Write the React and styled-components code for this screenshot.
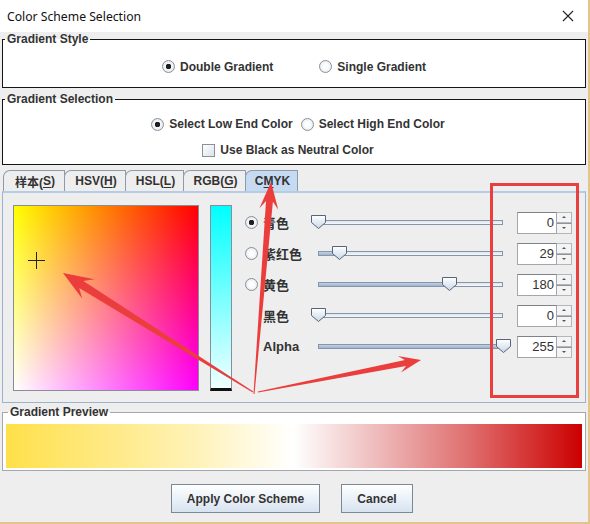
import styled, { createGlobalStyle } from "styled-components";

const GlobalStyle = createGlobalStyle`
  html, body {
    margin: 0;
    padding: 0;
    background: #eeeeee;
  }
  body {
    font-family: "Liberation Sans", Arial, "Noto Sans CJK SC", sans-serif;
    color: #333;
  }
`;

const rows = [
  { label: "青色", value: 0, radio: true, checked: true },
  { label: "紫红色", value: 29, radio: true },
  { label: "黄色", value: 180, radio: true },
  { label: "黑色", value: 0 },
  { label: "Alpha", value: 255 },
];

const tabs = [
  { text: "样本(", key: "S", after: ")", width: 62 },
  { text: "HSV(", key: "H", after: ")", width: 62 },
  { text: "HSL(", key: "L", after: ")", width: 59 },
  { text: "RGB(", key: "G", after: ")", width: 63 },
  { text: "C", key: "M", after: "YK", width: 53, selected: true },
];

// polygon for a tapering annotation arrow
const arrowPoints = (tail, tip, headLen, headW, shaftW, tailW = 1) => {
  const dx = tip[0] - tail[0];
  const dy = tip[1] - tail[1];
  const len = Math.hypot(dx, dy);
  const ux = dx / len;
  const uy = dy / len;
  const nx = -uy;
  const ny = ux;
  const barb = [tip[0] - ux * headLen, tip[1] - uy * headLen];
  const neck = [tip[0] - ux * headLen * 0.72, tip[1] - uy * headLen * 0.72];
  const p = (b, w) => `${(b[0] + nx * w).toFixed(1)},${(b[1] + ny * w).toFixed(1)}`;
  return [
    p(tail, tailW / 2),
    p(neck, shaftW / 2),
    p(barb, headW / 2),
    `${tip[0]},${tip[1]}`,
    p(barb, -headW / 2),
    p(neck, -shaftW / 2),
    p(tail, -tailW / 2),
  ].join(" ");
};

const Radio = ({ checked }) => (
  <RadioDot $checked={checked} />
);

const Spinner = ({ value }) => (
  <SpinBox>
    <SpinField>{value}</SpinField>
    <SpinButtons>
      <SpinButton>
        <Tri $up />
      </SpinButton>
      <SpinButton>
        <Tri />
      </SpinButton>
    </SpinButtons>
  </SpinBox>
);

const Slider = ({ value }) => {
  const pos = (value / 255) * 185;
  return (
    <SliderBox>
      <Track>
        <TrackFill style={{ width: pos }} />
      </Track>
      <Thumb style={{ left: pos - 8 }} width="17" height="16" viewBox="0 0 17 16">
        <defs>
          <linearGradient id="thumbg" x1="0" y1="0" x2="0" y2="1">
            <stop offset="0" stopColor="#ffffff" />
            <stop offset="1" stopColor="#c9d6e6" />
          </linearGradient>
        </defs>
        <path d="M1.5 1.5 H15.5 V8.5 L8.5 14.5 L1.5 8.5 Z" fill="url(#thumbg)" stroke="#55657a" strokeWidth="1" />
      </Thumb>
    </SliderBox>
  );
};

const App = () => {
  return (
    <>
      <GlobalStyle />
      <Window>
        <TitleBar>
          <span>Color Scheme Selection</span>
          <CloseIcon width="12" height="12" viewBox="0 0 12 12">
            <path d="M1 1 L11 11 M11 1 L1 11" stroke="#222" strokeWidth="1.1" />
          </CloseIcon>
        </TitleBar>

        <Body>
          <Group>
            <Legend>Gradient Style</Legend>
            <OptionRow $height={41} $gap={46} $shift={0}>
              <Option>
                <Radio checked />
                Double Gradient
              </Option>
              <Option>
                <Radio />
                Single Gradient
              </Option>
            </OptionRow>
          </Group>

          <Group $top={4}>
            <Legend>Gradient Selection</Legend>
            <SelectionBody>
              <OptionRow $height={20} $gap={8} $shift={4}>
                <Option>
                  <Radio checked />
                  Select Low End Color
                </Option>
                <Option>
                  <Radio />
                  Select High End Color
                </Option>
              </OptionRow>
              <OptionRow $height={20} $shift={-6}>
                <Option>
                  <CheckBox />
                  Use Black as Neutral Color
                </Option>
              </OptionRow>
            </SelectionBody>
          </Group>

          <TabStrip>
            {tabs.map((t) => (
              <Tab key={t.key} $width={t.width} $selected={t.selected}>
                {t.text}
                <u>{t.key}</u>
                {t.after}
              </Tab>
            ))}
          </TabStrip>
          <TabPanel>
            <ColorSquare>
              <Crosshair width="17" height="17" viewBox="0 0 17 17">
                <path d="M8.5 0 V17 M0 8.5 H17" stroke="#222" strokeWidth="1" />
              </Crosshair>
            </ColorSquare>
            <Strip />
            <Controls>
              {rows.map((r) => (
                <ControlRow key={r.label}>
                  <RadioCell>{r.radio && <Radio checked={r.checked} />}</RadioCell>
                  <RowLabel>{r.label}</RowLabel>
                  <Slider value={r.value} />
                  <Spinner value={r.value} />
                </ControlRow>
              ))}
            </Controls>
          </TabPanel>

          <PreviewGroup>
            <Legend>Gradient Preview</Legend>
            <PreviewBar />
          </PreviewGroup>

          <ButtonRow>
            <Button $width={149}>Apply Color Scheme</Button>
            <Button $width={72}>Cancel</Button>
          </ButtonRow>
        </Body>

        <Annotations width="590" height="524" viewBox="0 0 590 524">
          <rect x="491.5" y="184.5" width="86" height="212" fill="none" stroke="#e8403f" strokeWidth="3" />
          <polygon points={arrowPoints([254, 394], [271, 182], 27, 19, 7)} fill="#ec3d3d" />
          <polygon points={arrowPoints([253, 392], [63, 273], 30, 23, 8)} fill="#ec3d3d" />
          <polygon points={arrowPoints([258, 392], [421, 360], 22, 17, 6)} fill="#ec3d3d" />
        </Annotations>
      </Window>
    </>
  );
};

const Window = styled.div`
  position: relative;
  width: 588px;
  height: 522px;
  border-right: 2px solid #e3c48c;
  border-bottom: 2px solid #e3c48c;
  background: #eeeeee;
  display: flex;
  flex-direction: column;
  overflow: hidden;
`;

const TitleBar = styled.div`
  height: 32px;
  flex: none;
  background: #ffffff;
  display: flex;
  align-items: center;
  justify-content: space-between;
  padding: 0 14px 0 7px;
  font-family: "Segoe UI", "Noto Sans", "Open Sans", sans-serif;
  font-size: 12.2px;
  color: #111;
`;

const CloseIcon = styled.svg`
  display: block;
`;

const Body = styled.div`
  flex: 1;
  display: flex;
  flex-direction: column;
  padding: 0 2px 0 2px;
  font-size: 12px;
  font-weight: bold;
`;

const Group = styled.fieldset`
  margin: ${(p) => p.$top || 0}px 0 0 0;
  padding: 0;
  border: 1px solid #151515;
  background: #ffffff;
  min-width: 0;
`;

const Legend = styled.legend`
  margin-left: 2px;
  padding: 0 2px;
  font-size: 12px;
  font-weight: bold;
  line-height: 14px;
  color: #333;
`;

const OptionRow = styled.div`
  height: ${(p) => p.$height}px;
  display: flex;
  align-items: center;
  justify-content: center;
  gap: ${(p) => p.$gap || 0}px;
  margin-left: ${(p) => (p.$shift || 0) * 2}px;
`;

const SelectionBody = styled.div`
  display: flex;
  flex-direction: column;
  gap: 6px;
  padding: 8px 0 4px;
`;

const Option = styled.label`
  display: flex;
  align-items: center;
  gap: 5px;
  color: #333;
`;

const RadioDot = styled.span`
  width: 11px;
  height: 11px;
  border-radius: 50%;
  border: 1px solid #8b8f96;
  background: radial-gradient(circle at 50% 50%, ${(p) => (p.$checked ? "#1e1e1e 0 2.5px, #f4f6f9 3px" : "#ffffff 0, #ffffff 2px")}, #dbe2ea 100%);
  flex: none;
`;

const CheckBox = styled.span`
  width: 11px;
  height: 11px;
  border: 1px solid #8d9096;
  background: linear-gradient(135deg, #ffffff, #dbe2ea);
  flex: none;
`;

const TabStrip = styled.div`
  display: flex;
  margin: 5px 0 0 1px;
  height: 21px;
`;

const Tab = styled.div`
  width: ${(p) => p.$width}px;
  box-sizing: border-box;
  height: 21px;
  display: flex;
  align-items: center;
  justify-content: center;
  padding-left: 2px;
  border: 1px solid #8e9aab;
  border-bottom: none;
  border-top-left-radius: 7px;
  margin-left: -1px;
  background: ${(p) => (p.$selected ? "#c6dbf2" : "#eeeeee")};
  font-family: "Liberation Sans", Arial, "Noto Sans CJK SC", sans-serif;
  font-size: 12px;
  font-weight: bold;
  color: #333;
  &:first-child {
    margin-left: 0;
  }
  u {
    text-decoration-thickness: 1px;
    text-underline-offset: 2px;
  }
`;

const TabPanel = styled.div`
  height: 212px;
  border: 1px solid #9db2cd;
  border-top: 2px solid #b6cbe4;
  box-sizing: border-box;
  display: flex;
  align-items: flex-start;
  padding: 12px 0 0 10px;
`;

const ColorSquare = styled.div`
  position: relative;
  width: 184px;
  height: 184px;
  border: 1px solid #8a8d98;
  background: linear-gradient(to right, #ffffff, #ff00ff);
  flex: none;
  &::before {
    content: "";
    position: absolute;
    inset: 0;
    background: linear-gradient(to right, #ffff00, #ff0000);
    -webkit-mask-image: linear-gradient(to bottom, #000, transparent);
    mask-image: linear-gradient(to bottom, #000, transparent);
  }
`;

const Crosshair = styled.svg`
  position: absolute;
  left: 14px;
  top: 46px;
`;

const Strip = styled.div`
  width: 20px;
  margin-left: 11px;
  border: 1px solid #8a8d98;
  border-bottom: 3px solid #111;
  box-sizing: content-box;
  height: 182px;
  background: linear-gradient(to bottom, #00ffff, #f0ffff);
  flex: none;
`;

const Controls = styled.div`
  display: flex;
  flex-direction: column;
  margin: 2px 0 0 13px;
`;

const ControlRow = styled.div`
  height: 31px;
  display: flex;
  align-items: center;
`;

const RadioCell = styled.div`
  width: 13px;
  display: flex;
  margin-right: 5px;
`;

const RowLabel = styled.span`
  width: 55px;
  font-family: "Liberation Sans", Arial, "Noto Sans CJK SC", sans-serif;
  font-size: 13px;
  font-weight: bold;
  color: #333;
`;

const SliderBox = styled.div`
  position: relative;
  width: 185px;
  height: 16px;
  display: flex;
  align-items: center;
`;

const Track = styled.div`
  width: 100%;
  height: 5px;
  border: 1px solid #8595aa;
  box-sizing: border-box;
  background: linear-gradient(to bottom, #dfe5ec, #f5f7fa);
  display: flex;
`;

const TrackFill = styled.div`
  height: 100%;
  background: linear-gradient(to bottom, #c3d2e4, #9fb4cc);
`;

const Thumb = styled.svg`
  position: absolute;
  top: -1px;
  display: block;
`;

const SpinBox = styled.div`
  display: flex;
  margin-left: 14px;
  height: 22px;
`;

const SpinField = styled.div`
  width: 36px;
  height: 20px;
  border: 1px solid #a3a6ab;
  border-top-color: #7f8389;
  background: #ffffff;
  display: flex;
  align-items: center;
  justify-content: flex-end;
  padding-right: 2px;
  font-size: 13px;
  font-weight: normal;
  color: #333;
`;

const SpinButtons = styled.div`
  display: flex;
  flex-direction: column;
  width: 15px;
`;

const SpinButton = styled.div`
  flex: 1;
  border: 1px solid #b3b6bb;
  border-left: none;
  background: #f4f4f4;
  display: flex;
  align-items: center;
  justify-content: center;
  & + & {
    border-top: 1px solid #8f949b;
  }
`;

const Tri = styled.span`
  width: 0;
  height: 0;
  border-left: 2px solid transparent;
  border-right: 2px solid transparent;
  ${(p) => (p.$up ? "border-bottom: 2px solid #555;" : "border-top: 2px solid #555;")}
`;

const PreviewGroup = styled.fieldset`
  margin: 2px 0 0 0;
  padding: 5px 3px 2px 3px;
  border: 1px solid #a5a7aa;
  background: #ffffff;
  min-width: 0;
`;

const PreviewBar = styled.div`
  height: 44px;
  background: linear-gradient(to right, #ffe04a, #fff2b8 33%, #ffffff 50%, #eeb8b8 65%, #e07070 80%, #cc0000);
`;

const ButtonRow = styled.div`
  display: flex;
  justify-content: center;
  gap: 21px;
  margin-top: 13px;
  padding-right: 4px;
`;

const Button = styled.button`
  width: ${(p) => p.$width}px;
  height: 29px;
  border: 1px solid #7b8897;
  border-radius: 0;
  background: linear-gradient(to bottom, #ffffff, #d7e3f0);
  font-family: "Liberation Sans", Arial, sans-serif;
  font-size: 12px;
  font-weight: bold;
  color: #333;
  padding: 0;
`;

const Annotations = styled.svg`
  position: absolute;
  left: 0;
  top: 0;
  pointer-events: none;
`;

export default App;
